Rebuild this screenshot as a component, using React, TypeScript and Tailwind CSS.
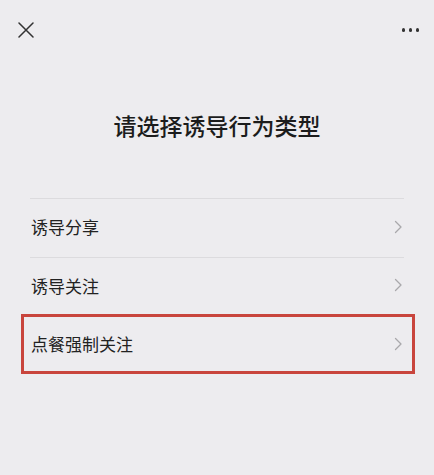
const font = { fontFamily: '"Noto Sans CJK SC", "Noto Sans", sans-serif' }

function CloseGlyph() {
  return (
    <svg width="16" height="16" viewBox="0 0 16 16" className="text-[#333]">
      <path d="M1 1l14 14M15 1L1 15" stroke="currentColor" strokeWidth="1.5" strokeLinecap="round" />
    </svg>
  )
}

function Chevron() {
  return (
    <svg width="9" height="14" viewBox="0 0 9 14" className="text-[#a9a8ab]">
      <path d="M1.5 1.5L7 7l-5.5 5.5" stroke="currentColor" strokeWidth="1.3" fill="none" strokeLinecap="round" strokeLinejoin="round" />
    </svg>
  )
}

const items = ['诱导分享', '诱导关注', '点餐强制关注']

export default function App() {
  return (
    <div className="h-[475px] w-full bg-[#edecef]" style={font}>
      {/* Nav bar */}
      <div className="flex h-[60px] items-center justify-between pl-[18px] pr-[15px]">
        <CloseGlyph />
        <div className="flex items-center gap-[3.5px]">
          <span className="size-[3.5px] rounded-full bg-[#333]" />
          <span className="size-[3.5px] rounded-full bg-[#333]" />
          <span className="size-[3.5px] rounded-full bg-[#333]" />
        </div>
      </div>

      <h1 className="mt-[49px] text-center text-[23px] font-medium leading-[32px] text-[#1c1c1c]">
        请选择诱导行为类型
      </h1>

      <div className="mx-[30px] mt-[57px]">
        {items.map((label, i) => (
          <div
            key={label}
            className="relative flex h-[58.5px] items-center justify-between border-t border-[#dcdbde] px-px pb-[2px]"
          >
            <span className="text-[17px] leading-none text-[#222]">{label}</span>
            <Chevron />
            {i === 2 && (
              <div className="pointer-events-none absolute -top-[2px] bottom-0 -left-[9px] -right-[11px] border-[3px] border-[#c9453d]" />
            )}
          </div>
        ))}
      </div>
    </div>
  )
}
